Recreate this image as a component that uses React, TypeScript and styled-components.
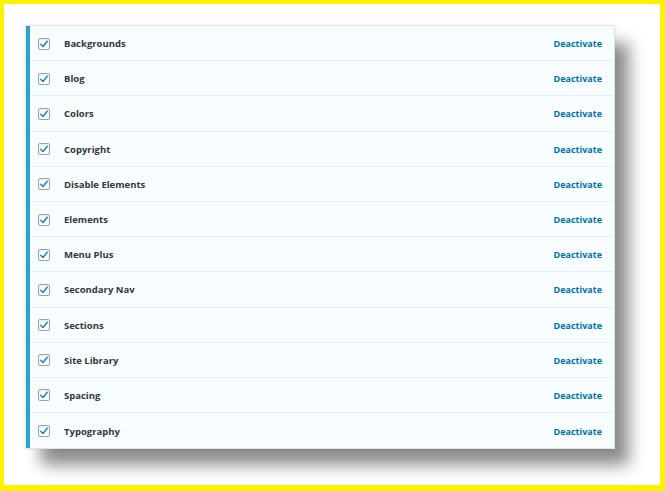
import React from 'react';
import styled, { createGlobalStyle } from 'styled-components';

const GlobalStyle = createGlobalStyle`
  html, body {
    margin: 0;
    padding: 0;
    background: #ffffff;
  }
`;

const plugins = [
  'Backgrounds',
  'Blog',
  'Colors',
  'Copyright',
  'Disable Elements',
  'Elements',
  'Menu Plus',
  'Secondary Nav',
  'Sections',
  'Site Library',
  'Spacing',
  'Typography',
];

function App() {
  return (
    <>
      <GlobalStyle />
      <Frame>
        <Panel>
          {plugins.map((name) => (
            <Row key={name}>
              <Check>
                <svg width="10" height="10" viewBox="0 0 20 20">
                  <path d="M3.5 10.5 L8 15 L16.5 4.5" fill="none" stroke="#1e8cbe" strokeWidth="3.2" strokeLinecap="round" strokeLinejoin="round" />
                </svg>
              </Check>
              <Name>{name}</Name>
              <Action>Deactivate</Action>
            </Row>
          ))}
        </Panel>
      </Frame>
    </>
  );
}

const Frame = styled.div`
  box-sizing: border-box;
  width: 665px;
  height: 491px;
  border-style: solid;
  border-color: #fff200;
  border-width: 4px 5px 6px 4px;
  background: #ffffff;
  padding: 22px 0 0 22px;
`;

const Panel = styled.div`
  width: 584px;
  display: flex;
  flex-direction: column;
  border-left: 4px solid #2ea2cc;
  background: #f7fcfe;
  outline: 1px solid #e2e4e7;
  box-shadow: 0 0 4px rgba(0, 0, 0, 0.12), 15px 17px 15px rgba(0, 0, 0, 0.45);
`;

const Row = styled.div`
  box-sizing: border-box;
  height: 35.2px;
  display: flex;
  align-items: center;
  padding: 1px 12px 0 8px;
  border-bottom: 1px solid #e3eef3;

  &:last-child {
    border-bottom: none;
  }
`;

const Check = styled.span`
  box-sizing: border-box;
  width: 12px;
  height: 12px;
  border: 1px solid #9aa3ab;
  border-radius: 2px;
  background: #ffffff;
  display: flex;
  align-items: center;
  justify-content: center;
  box-shadow: inset 0 1px 2px rgba(0, 0, 0, 0.1);
`;

const Name = styled.span`
  margin-left: 14px;
  flex: 1;
  font-family: 'Open Sans', 'Liberation Sans', sans-serif;
  font-weight: 700;
  font-size: 9.5px;
  color: #32373c;
`;

const Action = styled.a`
  font-family: 'Open Sans', 'Liberation Sans', sans-serif;
  font-weight: 700;
  font-size: 9px;
  color: #0073aa;
  text-decoration: none;
`;

export default App;
